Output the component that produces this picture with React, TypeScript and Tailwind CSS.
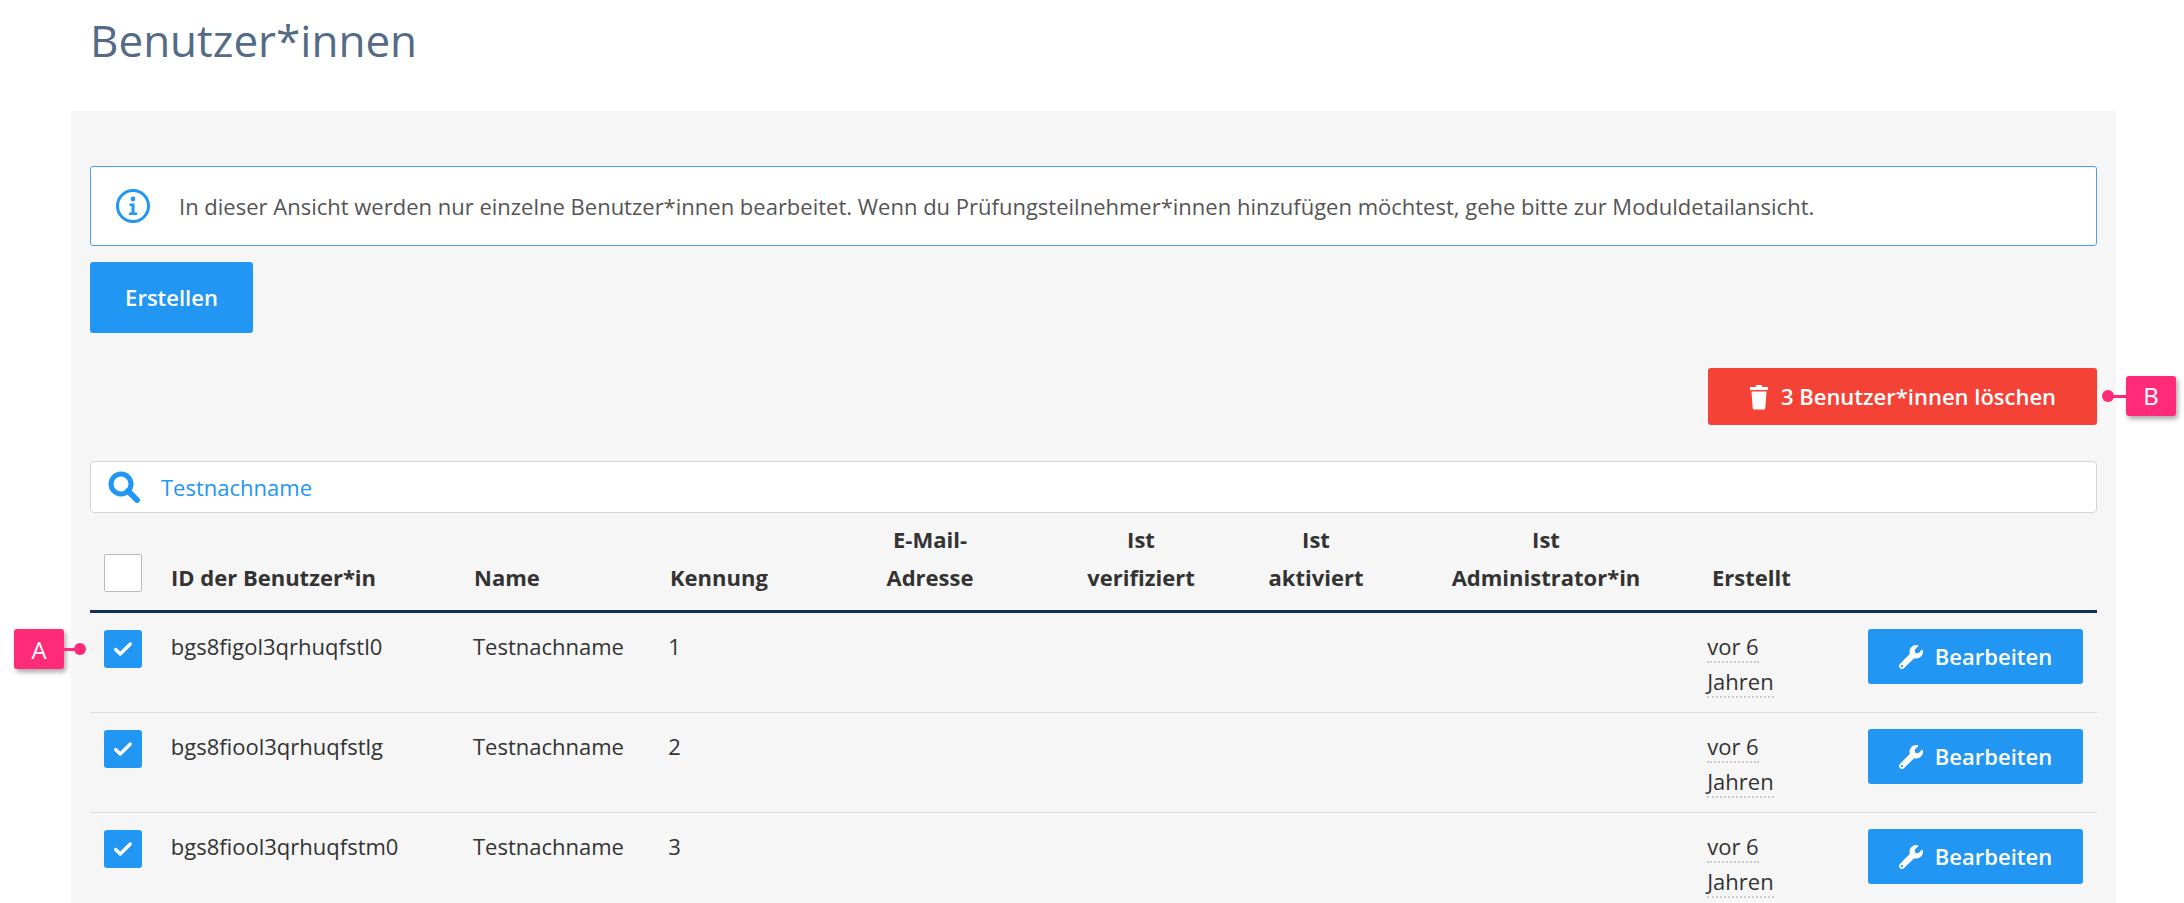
import React from "react";

const F = { fontFamily: '"Open Sans", "Liberation Sans", sans-serif' };

function Check() {
  return (
    <div className="w-[38px] h-[38px] rounded-[3px] bg-[#2196f3] flex items-center justify-center">
      <svg width="22" height="22" viewBox="0 0 24 24"><path d="M4 12.5l5 5L20 6.5" fill="none" stroke="white" strokeWidth="3.6" strokeLinecap="round" strokeLinejoin="round"/></svg>
    </div>
  );
}

function Wrench() {
  return (
    <svg width="24" height="24" viewBox="0 0 512 512"><path fill="white" d="M507.7 109.1c-2.2-9-13.5-12.1-20.1-5.5l-74.4 74.4-67.9-11.3-11.3-67.9 74.4-74.4c6.6-6.6 3.4-17.9-5.7-20.2-47.4-11.7-99.6.9-136.6 37.9-39.6 39.6-50.5 97.1-34.1 147.2L18.700 402.800c-25 25-25 65.5 0 90.500s65.5 25 90.5 0l213.2-213.2c50.1 16.7 107.500 5.700 147.400-34.200 37.100-37.1 49.700-89.300 37.900-136.800zM64 472c-13.2 0-24-10.8-24-24 0-13.3 10.8-24 24-24s24 10.7 24 24c0 13.200-10.700 24-24 24z"/></svg>
  );
}

const rows = [
  { id: "bgs8figol3qrhuqfstl0", k: "1" },
  { id: "bgs8fiool3qrhuqfstlg", k: "2" },
  { id: "bgs8fiool3qrhuqfstm0", k: "3" },
];

function Marker({ label }: { label: string }) {
  return (
    <div className="w-[50px] h-[40px] bg-[#ff2a78] text-white text-[24px] flex items-center justify-center rounded-[3px] shadow-[2px_3px_5px_rgba(0,0,0,0.35)]">{label}</div>
  );
}

export default function App() {
  return (
    <div style={F} className="w-[2184px] h-[903px] overflow-hidden bg-white relative text-[#333]">
      <h1 className="pl-[90px] pt-[12px] h-[111px] text-[44px] font-normal text-[#536b86] leading-[56px]">Benutzer*innen</h1>
      <div className="mx-[71px] w-[2045px] h-[792px] bg-[#f6f6f6] px-[19px] pt-[55px]">
        <div className="h-[80px] bg-white border border-[#4da0e6] rounded-[3px] flex items-center px-[24px] gap-[28px] text-[22px] text-[#555]">
          <svg width="36" height="36" viewBox="0 0 36 36"><circle cx="18" cy="18" r="15.5" fill="none" stroke="#2196f3" strokeWidth="3"/><circle cx="18" cy="11" r="2.4" fill="#2196f3"/><path d="M14.5 15.5h5v9h2.5v2.5h-8v-2.5h2.5v-6.5h-2z" fill="#2196f3"/></svg>
          <span>In dieser Ansicht werden nur einzelne Benutzer*innen bearbeitet. Wenn du Prüfungsteilnehmer*innen hinzufügen möchtest, gehe bitte zur Moduldetailansicht.</span>
        </div>
        <button className="mt-[16px] h-[71px] w-[163px] bg-[#2196f3] text-white text-[22px] font-semibold rounded-[3px]">Erstellen</button>
        <div className="flex justify-end mt-[35px] relative">
          <button className="h-[57px] w-[389px] bg-[#f44336] text-white text-[22px] font-semibold rounded-[3px] flex items-center justify-center gap-[12px]">
            <svg width="20" height="26" viewBox="0 0 20 26"><path d="M1 3h5.5l1-2h5l1 2H19v3H1z M2.5 7.5h15l-1.2 16.5a1.5 1.5 0 0 1-1.5 1.5H5.2a1.5 1.5 0 0 1-1.5-1.5z" fill="white"/></svg>
            3 Benutzer*innen löschen
          </button>
          <div className="absolute right-[-79px] top-[8px] flex items-center">
            <div className="w-[12px] h-[12px] rounded-full bg-[#ff2a78] -mr-[4px]"></div>
            <div className="w-[16px] h-[3px] bg-[#ff2a78]"></div>
            <Marker label="B" />
          </div>
        </div>
        <div className="mt-[36px] h-[52px] bg-white border border-[#d4d4d4] rounded-[4px] flex items-center px-[16px] gap-[20px]">
          <svg width="34" height="34" viewBox="0 0 34 34"><circle cx="14" cy="14" r="10" fill="none" stroke="#2196f3" strokeWidth="5"/><path d="M21 21l9 9" stroke="#2196f3" strokeWidth="6" strokeLinecap="round"/></svg>
          <span className="text-[22px] text-[#2196f3]">Testnachname</span>
        </div>
        <div className="mt-[28px] h-[72px] flex items-end pb-[14px] border-b-[3px] border-[#10305a] text-[22px] font-bold text-[#333] leading-[38px]">
          <div className="w-[70px] pl-[14px] pb-[4px]"><div className="w-[38px] h-[38px] bg-white border border-[#bbb] rounded-[2px]"></div></div>
          <div className="w-[303px] pl-[11px]">ID der Benutzer*in</div>
          <div className="w-[196px] pl-[11px]">Name</div>
          <div className="w-[160px] pl-[11px]">Kennung</div>
          <div className="w-[222px] text-center">E-Mail-<br/>Adresse</div>
          <div className="w-[200px] text-center">Ist<br/>verifiziert</div>
          <div className="w-[150px] text-center">Ist<br/>aktiviert</div>
          <div className="w-[310px] text-center">Ist<br/>Administrator*in</div>
          <div className="w-[162px] pl-[11px]">Erstellt</div>
        </div>
        {rows.map((r, i) => (
          <div key={i} className="h-[100px] flex items-start pt-[16px] border-b border-[#ddd] text-[22px] leading-[35px] relative">
            <div className="w-[70px] pl-[14px] pt-[1px]"><Check /></div>
            <div className="w-[303px] pl-[11px]">{r.id}</div>
            <div className="w-[196px] pl-[11px]">Testnachname</div>
            <div className="w-[160px] pl-[11px]">{r.k}</div>
            <div className="w-[882px]"></div>
            <div className="w-[162px] pl-[11px]">
              <span className="border-b-2 border-dotted border-[#ccc]">vor 6</span><br/>
              <span className="border-b-2 border-dotted border-[#ccc]">Jahren</span>
            </div>
            <div className="w-[240px] flex justify-end pr-[14px]">
              <button className="h-[55px] w-[215px] bg-[#2196f3] text-white text-[22px] font-semibold rounded-[3px] flex items-center justify-center gap-[12px]">
                <Wrench />Bearbeiten
              </button>
            </div>
            {i === 0 && (
              <div className="absolute left-[-76px] top-[16px] flex items-center">
                <Marker label="A" />
                <div className="w-[14px] h-[3px] bg-[#ff2a78]"></div>
                <div className="w-[12px] h-[12px] rounded-full bg-[#ff2a78] -ml-[4px]"></div>
              </div>
            )}
          </div>
        ))}
      </div>
    </div>
  );
}
